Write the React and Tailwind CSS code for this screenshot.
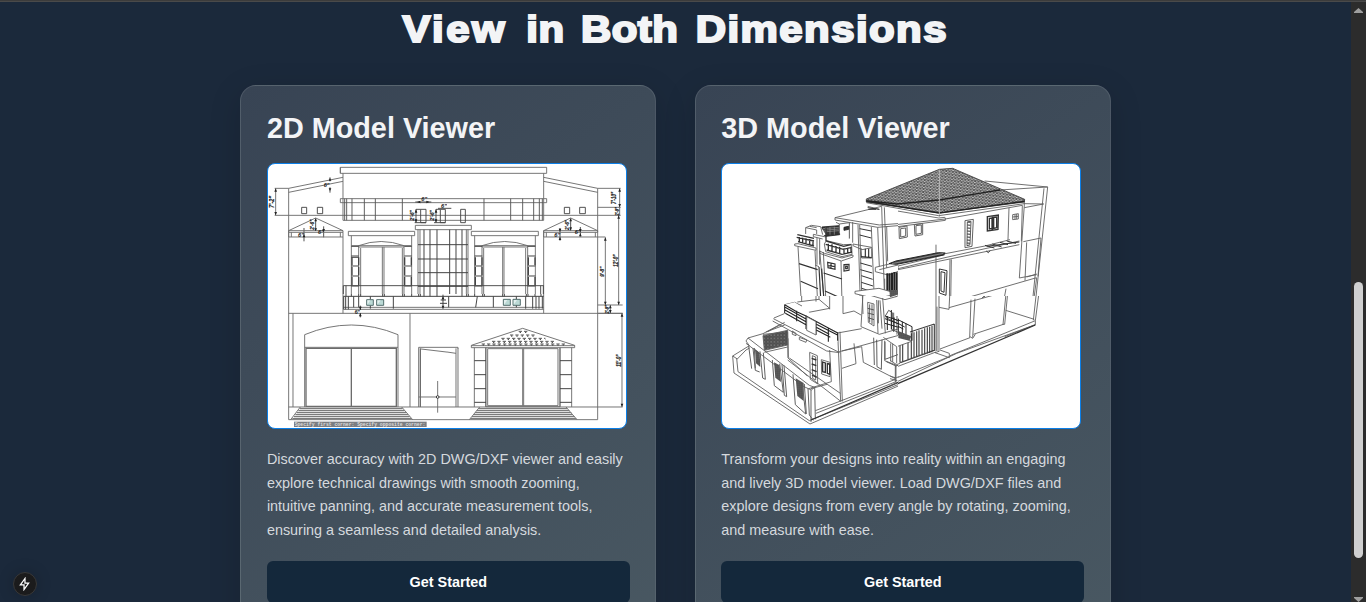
import React from "react";

// Each drawing is split into four tiles, drawn at three units per pixel.
// `clip` is the tile's own area (x, y, width, height), so that neighbours meet without doubling.
function Tile({ id, x, y, clip, children }) {
  return (
    <g transform={`translate(${x} ${y}) scale(0.33333)`}>
      <clipPath id={id}>
        <rect x={clip[0]} y={clip[1]} width={clip[2]} height={clip[3]} />
      </clipPath>
      <g clipPath={`url(#${id})`}>{children}</g>
    </g>
  );
}

function Note({ x, y, size = 20, children }) {
  return (
    <text
      transform={`translate(${x} ${y}) rotate(-90)`}
      fontSize={size}
      fontWeight="bold"
      fontStyle="italic"
      fill="#222"
      stroke="#222"
      strokeWidth="0.6"
      textAnchor="middle"
      textLength={size * 1.8}
      lengthAdjust="spacingAndGlyphs"
    >
      {children}
    </text>
  );
}

function Elevation() {
  return (
    <svg viewBox="268 164 358 264" className="block h-full w-full font-['Liberation_Sans',sans-serif]" fill="none" stroke="#6c6c6c" strokeWidth="2.8">
      <Tile id="elevation-nw" x={262} y={158} clip={[0, 0, 555, 408]}>
        <path d="M570 28H235V46H570M235 28V46M243 46V187M80 91L243 58M80 103L243 70M80 91V420M38 91H80M41 91V172M38 172H570M235 122H570M235 134H570M235 122V134M243 187H570M243 420V237" />
        <path stroke="#555" d="M248 122V187M254 122V187M270 122V187M307 122V187M340 122V187M421 122V187" />
        <path stroke="#444" d="M119 148H134V167H119ZM166 148H182V167H166ZM476 154H492V194H476ZM535 154H550V194H535ZM204 58V70M204 88V104M126 210V250M185 205V238M161 182V218M462 154V194M522 154V194M462 154H476M522 154H535M458 194H492M516 194H550M460 132H508M528 151H565" />
        <path d="M80 218L161 180L243 218M80 218H243V223H80ZM80 223V237H243V223M88 223V237M235 223V237" />
        <path d="M259 220H458V233H259ZM268 233V420M449 233V420M268 263H449M290 263V415M426 263V415M296 270V415M421 270V415M290 267H426M290 263Q357 238 426 263M361 267V415M366 267V415M460 202H570M460 202V215H570M468 215V420M474 215V420" />
        <path stroke="#444" strokeWidth="3" d="M268 265H290M268 294H290M268 298H290M268 324H290M268 354H290M268 384H290M427 265H449M427 294H449M427 324H449M427 354H449M427 384H449M468 260H570M468 303H570M468 344H570M468 385H570M486 215V415M504 215V415M525 215V415M563 215V415" />
        <path stroke="#444" d="M244 383H570M244 383V420M252 383V420M244 415H570" />
        <path stroke="#444" strokeWidth="4" d="M270 298V322M270 327V352M270 357V382M290 298V322M290 327V352M290 357V382M428 298V322M428 327V352M428 357V382M448 298V322M448 357V382" />
        <Note x={37} y={132}>7'-2"</Note>
        <Note x={157} y={200} size={17}>2'-6"</Note>
        <Note x={456} y={172} size={17}>2'-6"</Note>
        <Note x={517} y={172} size={17}>2'-6"</Note>
        <g fill="#222" stroke="none" fontSize="17" fontWeight="bold" fontStyle="italic"><text x="185" y="88">6"</text><text x="108" y="238">6"</text><text x="168" y="228">6"</text><text x="478" y="130">6"</text><text x="537" y="149">6"</text></g>
        <path fill="#222" stroke="none" d="M200 68L204 60L208 68ZM200 91L204 99L208 91ZM122 238L126 228L130 238ZM181 213L185 222L189 213ZM157 190L161 180L165 190ZM157 211L161 220L165 211ZM475 128L465 132L475 136ZM493 128L503 132L493 136ZM37 101L41 91L45 101ZM37 162L41 172L45 162ZM458 164L462 154L466 164ZM458 184L462 194L466 184ZM518 164L522 154L526 164ZM518 184L522 194L526 184Z" />
      </Tile>

      <Tile id="elevation-ne" x={440} y={158} clip={[21, 0, 564, 408]}>
        <path d="M0 28H320V46H0M311 46V187M311 58L473 91M311 70L473 103M473 91V420M473 91H542M473 148H542M0 172H542M0 122H320V134H0M0 187H311M311 420V218M539 91V172M496 238V420M536 172V420" />
        <path stroke="#555" d="M132 122V187M212 122V187M248 122V187M281 122V187M298 122V187M307 122V187" />
        <path stroke="#444" d="M373 148H389V167H373ZM419 148H436V167H419ZM62 154H76V194H62ZM0 151H34M392 182V218M360 210V248M421 207V236" />
        <path d="M311 218L392 180L473 218M311 218H473V223H311ZM311 223V237H496M319 223V237M466 223V237" />
        <path d="M94 220H295V233H94ZM104 233V420M286 233V420M104 263H286M126 263V415M263 263V415M131 270V415M257 270V415M126 267H263M126 263Q194 238 263 263M188 267V415M192 267V415M0 202H94V215H0M84 215V420M79 215V420" />
        <path stroke="#444" strokeWidth="3" d="M104 265H127M104 294H127M104 324H127M104 354H127M104 384H127M263 265H286M263 294H286M263 324H286M263 354H286M263 384H286M0 260H84M0 303H84M0 344H84M0 385H84M29 215V415M48 215V415M66 215V415" />
        <path stroke="#444" d="M0 383H311M0 415H311M302 383V415M310 383V420" />
        <path stroke="#444" strokeWidth="4" d="M106 298V322M106 327V352M106 357V382M126 298V322M126 327V352M126 357V382M265 298V322M265 327V352M265 357V382M285 298V322M285 357V382" />
        <Note x={529} y={120}>7'-10"</Note>
        <Note x={536} y={160} size={14}>2'-9"</Note>
        <Note x={387} y={201} size={17}>2'-6"</Note>
        <Note x={493} y={341} size={17}>9'-8"</Note>
        <Note x={534} y={308}>12'-0"</Note>
        <g fill="#222" stroke="none" fontSize="17" fontWeight="bold" fontStyle="italic"><text x="343" y="238">6"</text><text x="404" y="229">6"</text></g>
        <path fill="#222" stroke="none" d="M388 190L392 180L396 190ZM388 208L392 218L396 208ZM356 212L360 222L364 212ZM356 246L360 236L364 246ZM417 213L421 222L425 213ZM417 235L421 226L425 235ZM535 101L539 91L543 101ZM535 138L539 148L543 138ZM492 248L496 238L500 248ZM532 182L536 172L540 182Z" />
      </Tile>

      <Tile id="elevation-sw" x={262} y={290} clip={[0, 12, 555, 423]}>
        <path d="M80 0V389M93 70V351M80 70H570M243 0V70M444 70V351M128 134V351M408 134V351M128 134Q268 76 408 134M128 172H408M80 351H570M80 389H570M115 351L86 389M419 351L452 389M470 172H570M470 172V351M477 177L570 188M244 52H570M244 58H570" />
        <path strokeWidth="4" d="M132 175V349H403V175ZM268 175V349M475 175V351" />
        <path stroke="#444" strokeWidth="3" d="M244 19H570M245 19V58M251 19V58M259 19V58M275 19V52M290 19V52M325 19V28M325 47V56M394 19V56M543 14V56M252 0V19M268 0V19M290 0V19M296 0V19M362 0V19M367 0V19M422 0V19M427 0V19M449 0V19M470 0V19M475 0V19M486 0V19M504 0V19M525 0V19" />
        <path fill="#bcdad6" stroke="#385755" strokeWidth="2.5" d="M314 29H334V46H314ZM344 29H365V46H344Z" />
        <path fill="#fff" stroke="none" opacity=".6" d="M316 31H325L316 44ZM346 31H356L346 44Z" />
        <path stroke="#7c7c7c" strokeWidth="4" d="M113 356H422M109 362H428M104 368H433M100 374H438M96 380H443M91 386H448" />
        <path d="M527 273V368M470 321H570" /><circle cx="527" cy="321" r="4" fill="#fff" stroke="#333" />
        <path stroke="#333" d="M295 47V60M295 69V82M536 30H552M534 40H555" />
        <path fill="#222" stroke="none" d="M291 50L295 60L299 50ZM291 79L295 69L299 79ZM539 28L543 19L547 28ZM539 47L543 56L547 47Z" />
        <text x="278" y="72" fontSize="16" fontWeight="bold" fill="#222" stroke="none">6"</text>
        <rect x="96" y="395" width="398" height="16" fill="#7b7e82" stroke="none" />
        <text x="98" y="408" fontSize="14.5" fontWeight="bold" textLength="392" lengthAdjust="spacingAndGlyphs" fill="#dcdcdc" stroke="none" className="font-['Liberation_Mono',monospace]">Specify first corner: Specify opposite corner:</text>
      </Tile>

      <Tile id="elevation-se" x={440} y={290} clip={[21, 12, 564, 423]}>
        <path d="M0 70H548M311 0V70M473 0V389M0 351H548M0 389H473M0 172H54V177M48 175V351M54 175V351M0 183L48 190M0 321H48M119 351L88 389M378 351L411 389M546 70V351M496 0V45M536 0V45M473 45H548M511 45V70M473 70H548M0 52H311M0 58H311" />
        <path stroke="#444" strokeWidth="3" d="M0 19H311M26 19V52M112 19L107 52M160 19V52M229 19V28M229 46V52M257 19V56M278 19V56M288 19V56M297 19V56M307 19V56M66 0V19M80 0V19M85 0V19M104 0V19M128 0V19M133 0V19M188 0V19M193 0V19M259 0V19M264 0V19M285 0V19M303 0V19" />
        <path fill="#bcdad6" stroke="#385755" strokeWidth="2.5" d="M190 28H211V46H190ZM219 28H241V46H219Z" />
        <path fill="#fff" stroke="none" opacity=".6" d="M192 30H202L192 44ZM221 30H231L221 44Z" />
        <path d="M94 166L248 115L404 166V173H94ZM94 167H404M103 173V351M137 173V351M143 176V347H354V176ZM138 173V350H360V173M248 176V347M251 176V347M360 173V351M395 173V351" />
        <path stroke="#444" strokeWidth="3" d="M103 212H138M103 254H138M103 296H138M103 337H138M360 212H395M360 254H395M360 296H395M360 337H395" />
        <path stroke="#555" strokeWidth="3" strokeDasharray="10 6" d="M236 124H262M210 135H290M184 145H316M156 154H344M125 162H378" />
        <path stroke="#555" strokeWidth="4" strokeDasharray="4 12" d="M239 127H266M213 138H290M187 148H316M159 157H344M128 165H378" />
        <path stroke="#7c7c7c" strokeWidth="4" d="M115 356H382M110 362H388M105 368H394M100 374H399M96 380H404M91 386H409" />
        <path fill="#222" stroke="none" d="M492 35L496 45L500 35ZM532 35L536 45L540 35ZM507 55L511 45L515 55ZM507 60L511 70L515 60ZM542 80L546 70L550 80ZM542 341L546 351L550 341Z" />
        <Note x={507} y={58} size={14}>2'-9"</Note><Note x={543} y={212}>11'-0"</Note>
      </Tile>
    </svg>
  );
}

function House() {
  return (
    <svg viewBox="722 164 358 264" className="block h-full w-full" fill="none" stroke="#606060" strokeWidth="2.7">
      <defs>
        <pattern id="tiles" width="10" height="9" patternUnits="userSpaceOnUse" patternTransform="rotate(8)">
          <rect width="10" height="9" fill="#404040" />
          <path d="M0 2H6M5 6.500H10" stroke="#e4e4e4" strokeWidth="2.500" />
        </pattern>
        <pattern id="lattice" width="10" height="10" patternUnits="userSpaceOnUse">
          <rect width="10" height="10" fill="#1c1c1c" />
          <rect x="3" y="3" width="4.500" height="4.500" fill="#ddd" />
        </pattern>
        <pattern id="mesh" width="6" height="6" patternUnits="userSpaceOnUse">
          <rect width="6" height="6" fill="#161616" />
          <rect x="2" y="2" width="1.500" height="1.500" fill="#777" />
        </pattern>
      </defs>

      <Tile id="house-ne" x={890} y={158} clip={[24, 0, 576, 414]}>
        <path d="M-60 145L146 180L165 178M0 202L166 183M0 209L166 187M166 179V187M166 183L397 142M284 69L473 87M330 96L473 87M473 87L436 435M462 91L427 435M403 137L461 138M461 138L403 149M403 124V141L388 360M397 142L394 250M357 150L354 246M400 251L453 240L444 355M410 253L405 368M138 260V435" />
        <path strokeWidth="3" d="M27 208L51 204L52 237L28 242ZM32 212L47 210V234L32 237ZM73 200L98 197V230L75 234ZM78 203L94 201V226L78 229ZM225 188L250 184L246 265L225 269ZM232 192L243 190L240 260L231 263Z" />
        <path stroke="#333" strokeWidth="9" strokeDasharray="3 6" d="M237 191L235 264" />
        <path stroke="#333" strokeWidth="4" d="M292 176L325 171L324 214L292 219ZM298 181L306 180V211L298 213ZM311 178L320 177V209L311 211ZM307 176V216" />
        <path d="M368 170L385 167V183L368 185ZM375 169V184M380 168V183M368 177L385 175" />
        <path d="M24 324L165 290M24 332L165 299L388 249M0 340L165 306L388 260M24 324V332M166 287L285 264L360 245M180 304L178 435M184 304L182 435M180 434L440 359M388 360L440 350M410 357L440 348M348 392L340 435M242 420V435M255 417V435M440 360L430 435" />
        <path stroke="#333" strokeWidth="3" d="M285 262L313 270M307 258L335 267M330 253L354 260M350 249L378 256M290 265L388 252M289 279L295 284L300 278M148 333L171 338L168 412L148 405ZM153 341L165 344L162 403L153 399Z" />
      </Tile>

      <Tile id="house-nw" x={716} y={158} clip={[0, 0, 546, 414]}>
        <path d="M455 145L490 154M357 179L497 145M357 179V186L485 208L570 201M357 179L490 201L570 195M497 145L506 435M505 148L512 330M400 192V240M410 192V254M426 200L433 435M431 201L438 435M466 207L474 400M485 208L490 325M512 205L515 310" />
        <path stroke="#333" strokeWidth="3" d="M455 149L490 154M457 154H480M431 212L466 219M431 231L466 240M433 315L468 325M433 335L469 345M436 353L470 364M436 373L471 384M437 391L472 402" />
        <path fill="#333" stroke="#222" d="M318 207L370 203L371 230L330 235L318 227Z" />
        <path stroke="#999" strokeWidth="2" d="M320 212L369 208M320 217L369 213M320 222L369 218M329 207V230M342 207V230M355 206V230" />
        <path fill="#fff" stroke="none" d="M269 209L286 202L314 206L330 230L295 238L269 216ZM370 198L400 194V242L370 225ZM236 258L244 230L294 239L297 277L236 263ZM246 266L297 278L305 435H256ZM322 282L376 305L378 435H330Z" />
        <path d="M269 209L286 202L314 206L320 230M269 209V228M269 209L302 216V228M281 205L302 209M370 198L400 194V242M370 198V225M360 193L370 198M246 266L256 435M297 278L305 435M311 278L325 435M322 282L330 435M236 258L246 257L300 270V277L236 263ZM311 279L325 286L378 300L411 291V297L376 309L311 286ZM292 229L330 237M292 229V236L320 243M303 239V320M311 241V320" />
        <path fill="#fff" d="M325 258L331 248L382 260L407 259L408 289L378 296L329 281Z" />
        <path stroke="#333" strokeWidth="4" d="M244 230L294 241M242 238L294 249M246 251L294 264M331 249L383 265L405 260M329 259L382 274L407 268M332 276L378 289L408 282M250 237V252M260 239V254M270 241V259M281 243V261M291 246V265M337 257V276M348 259V280M360 264V283M371 266V287M384 271V288M395 269V286M405 266V284M330 207V250" />
        <path fill="#333" stroke="#222" d="M384 208L398 205V214L384 217Z" />
        <path d="M375 309L378 435M411 258L467 268M411 258V263L438 275L468 269M435 270L437 300L467 300V271M297 321L309 326M301 422L338 418" />
        <path stroke="#333" strokeWidth="3.5" d="M249 317L305 335M254 370L306 392M323 345L378 363M327 399L378 422M309 327L314 420L323 415L317 332M335 313L357 318V334L336 329ZM345 317V331M336 323L357 326M384 320L399 319V337L384 339ZM389 325H394V332H389ZM448 272V297M458 272V297M435 296L467 299" />
        <path d="M478 328L520 318M478 328V341L516 351L570 332M490 335L570 315M506 362V402" />
        <path stroke="#222" strokeWidth="6" d="M514 346V402M521 346V405M528 344V406M535 342V407M542 343V406" />
        <path fill="#fff" d="M417 400L489 391L546 407L507 416L474 421L417 407Z" />
        <path d="M546 407V414M230 433L250 435" />
      </Tile>

      {/* Roof and the dark ledge under it, which cross the tile boundary */}
      <g transform="translate(890 158) scale(0.33333)">
        <path fill="url(#tiles)" stroke="#444" d="M148 34L188 31L404 124L403 132L146 165L-71 132V123Z" />
        <path stroke="#222" strokeWidth="4" d="M-71 128L20 138L148 126L285 103L330 96M-71 130L148 165L403 130" />
        <path stroke="#bbb" strokeWidth="3" d="M148 35V178" />
        <path d="M-71 134L146 173L403 137" />
        <path fill="#444" stroke="#222" strokeWidth="3" d="M-3 317L18 309L145 284L166 285L160 291L20 319Z" />
        <path stroke="#ccc" strokeWidth="1.5" d="M6 317L160 286" />
      </g>

      <Tile id="house-sw" x={716} y={290} clip={[0, 18, 546, 417]}>
        <path fill="#fff" d="M50 198L100 167L90 153L96 144L141 131L206 96M50 198L54 249L282 402L570 278M50 198L64 207L90 180L101 174M62 205L66 245L280 392L570 274" />
        <path fill="#fff" d="M174 84L205 71L332 178L365 189L371 200L173 92Z" stroke="none" />
        <path d="M96 144L280 286L296 292L286 300L264 290L90 160" />
        <path d="M141 133L215 126L216 204L274 258M172 86L367 186L570 130M170 93L332 183L371 188M206 44L365 129L437 116M206 44L236 37L258 48M244 36L309 28L341 55L278 67M309 28V16L341 17V58M381 0V71L414 63L435 75M257 0V33M300 35V10M365 129L374 335M372 125L379 334M414 160L420 221L378 235M378 183L437 170M437 170L442 217L538 266M298 362L374 333L538 268M300 370L540 275M215 210L373 333M220 204L373 310M333 283L285 296M341 180L346 275L278 296M174 84L205 71" />
        <path fill="#fff" d="M206 44L236 37L365 129V155L208 70Z" stroke="none" />
        <path stroke="#222" strokeWidth="3.2" d="M206 44L242 65L270 78L365 129M206 51L270 87L366 136M207 60L270 95L340 133M208 70L270 104L343 142M242 62V94M270 76V117M300 95V134M337 114V155M365 127V152M206 44V70" />
        <path fill="#fff" d="M272 80L300 95V135L272 121Z" />
        <path fill="url(#lattice)" d="M141 137L215 121V165L145 181Z" />
        <path d="M145 187L215 171M216 145L217 203M229 123L240 130V137L229 133ZM250 142L272 150L270 157L250 149ZM281 187L304 197L305 282L283 268ZM289 197L299 201V270L290 265ZM316 209L342 217V260L317 252ZM155 125L206 97M150 126L206 105" />
        <path stroke="#333" strokeWidth="4" d="M320 216L328 219V247L320 245ZM334 220L341 222V253L334 250ZM287 205L301 210M287 222L301 227M287 239L302 245M288 255L302 262" />
        <path fill="url(#mesh)" stroke="none" d="M117 177L131 188L133 231L120 220ZM174 217L191 226L195 276L178 263ZM239 265L263 279L263 333L244 318Z" />
        <path strokeWidth="3" d="M98 168L107 236M111 174L118 241L131 246M115 174L118 235M132 184L140 264L148 268L142 188M169 210L175 287L202 307L191 221M198 223L205 316L212 320L204 226M231 253L238 344L269 372L260 292M265 282L271 372M276 295L280 375L292 391M285 300V396M296 292L298 388" />
        <path fill="#fff" d="M441 30L508 20V130L486 130L435 110Z" stroke="none" />
        <path d="M430 0L439 12L441 72M416 7L430 0L493 6L544 19L507 29L440 9M441 12L435 110M482 30L486 130M492 31L498 116M500 24L508 130M435 110L490 133L570 110M455 37L474 42V108L457 97Z" />
        <path stroke="#444" strokeWidth="2.6" d="M461 43V97M468 43V102M455 55L474 60M455 69L474 74M456 83L474 89M487 31V100M473 143L475 225M482 149L483 230L496 238L498 149M508 78L518 61L529 68V84L570 104M509 82L546 101M527 82V118L546 127M533 68V126M543 78V134M507 208L570 185M511 215L540 228L570 218M507 155V208M538 228V275" />
        <path fill="url(#mesh)" stroke="none" d="M529 0L546 3V14L529 10Z" />
        <path stroke="#333" strokeWidth="4" d="M285 390L570 267" />
      </Tile>

      <Tile id="house-se" x={890} y={290} clip={[24, 18, 576, 417]}>
        <path d="M138 0V183M147 0V52L177 58L180 0M177 53L351 4M147 52L147 185M141 50V183M243 29L239 143M255 26L248 143M240 140L248 145L256 133M349 0L339 104M354 0L344 103L338 103M448 0L436 92M440 0L430 91M436 92V104L344 140M347 61L433 88M150 177L240 143M250 133L340 103M180 197L436 92M24 274L200 190L436 104M147 184L135 188L178 203V190L150 180M24 229L138 186M24 262L178 200" />
        <path stroke="#333" strokeWidth="4" d="M0 291L436 105" />
        <path stroke="#444" strokeWidth="3.5" d="M30 144V218M38 147V215M54 145V210M64 130V207M72 127V204M80 124V201M87 121V199M96 119V196M104 115V194M112 112V191M119 110V189M126 107V187M133 102V183M60 126L133 102M31 218L132 181" />
        <path fill="#fff" d="M0 118L38 140L65 154L20 170L0 160Z" />
        <path stroke="#222" strokeWidth="3" d="M0 77L66 110V152M25 86V135M37 95V138M48 101V142M24 100L44 111M24 109L40 117M146 0V13L168 16V0M151 0V8L163 10V0M277 23L286 17L292 11" />
        <path fill="url(#mesh)" stroke="none" d="M25 123L64 139L58 152L25 144Z" />
      </Tile>

      {/* Stair block at the centre of the lower half */}
      <g transform="translate(890 290) scale(0.33333)">
        <path d="M18 278V225M0 258L18 264L26 260M0 266L22 272M0 211L20 224L30 220M0 288L20 278M-16 152V212L20 226M2 160V214M8 161V216M-20 142L20 170V220" />
        <path stroke="#222" strokeWidth="3" d="M-15 78L26 92M-15 86L24 101M4 60V118M12 82V119M-8 78V120M-15 100L26 112" />
        <path fill="url(#mesh)" stroke="none" d="M-2 0L23 0V14L0 22Z" />
      </g>
    </svg>
  );
}

function Card({ title, lines, drawing }) {
  return (
    <section className="h-[560px] w-[416px] shrink-0 rounded-[16px] border border-white/10 bg-linear-[145deg,#384454,#495862] px-[25.6px] pt-[22px] shadow-[0_8px_32px_rgba(0,0,0,0.15)]">
      <h2 className="text-[28.8px] leading-[40px] font-bold whitespace-nowrap text-[#f3f4f6]">{title}</h2>
      <div className="mt-[15px] h-[266px] w-[360px] overflow-hidden rounded-[8px] border border-[#0b7fe8] bg-white">{drawing}</div>
      <p className="mt-[19px] text-[14.4px] leading-[23.6px] whitespace-nowrap text-[#d5d9de]">
        {lines.map((line) => (
          <span key={line} className="block">{line}</span>
        ))}
      </p>
      <button className="mt-[19px] block h-[42px] w-[363px] rounded-[6px] bg-[#14283b] text-[14.4px] font-bold text-white">Get Started</button>
    </section>
  );
}

export default function App() {
  return (
    <div className="flex h-[602px] w-[1366px] flex-col overflow-hidden bg-[#1b293b] font-['Liberation_Sans',Arial,sans-serif]">
      <div className="h-[2px] shrink-0 border-b border-[#4a4a4a] bg-[#3c3c3c]" />
      <div className="flex min-h-0 flex-1">
        <main className="flex w-[1351px] shrink-0 flex-col items-center">
          <h1 className="mt-[3px] h-[48px] scale-x-[1.14] text-[36.8px] leading-[49px] font-bold tracking-[1.85px] whitespace-nowrap text-[#f3f4f6] [-webkit-text-stroke:2.1px_#f3f4f6]">
            <span className="mr-[4.8px] tracking-[2.1px]">View</span>{" "}
            <span className="mr-[2.1px] tracking-[0.6px]">in</span>{" "}
            <span className="mr-[3.2px] tracking-[0.4px]">Both</span>{" "}
            <span className="tracking-[1.27px]">Dimensions</span>
          </h1>
          <div className="mt-[32px] flex gap-[38.4px]">
            <Card
              title="2D Model Viewer"
              drawing={<Elevation />}
              lines={["Discover accuracy with 2D DWG/DXF viewer and easily", "explore technical drawings with smooth zooming,", "intuitive panning, and accurate measurement tools,", "ensuring a seamless and detailed analysis."]}
            />
            <Card
              title="3D Model Viewer"
              drawing={<House />}
              lines={["Transform your designs into reality within an engaging", "and lively 3D model viewer. Load DWG/DXF files and", "explore designs from every angle by rotating, zooming,", "and measure with ease."]}
            />
          </div>
        </main>
        <aside className="flex w-[15px] shrink-0 flex-col items-center bg-[#2c2c2c] pt-[6px]">
          <svg className="h-[5px] w-[9px]" viewBox="0 0 9 5"><path d="M0 5V4L4.5 0L9 4V5Z" fill="#9f9f9f" /></svg>
          <div className="mt-[269px] h-[276px] w-[9px] rounded-full bg-[#d0d0d0]" />
          <svg className="mt-[39px] h-[5px] w-[9px]" viewBox="0 0 9 5"><path d="M0 0V1L4.5 5L9 1V0Z" fill="#9f9f9f" /></svg>
        </aside>
      </div>
      <div className="fixed top-[572px] left-[13px] flex size-[24px] items-center justify-center rounded-full border border-[#383838] bg-[#1b1b1c] shadow-[0_0_16px_rgba(0,0,0,0.2)]">
        <svg className="mr-px h-[14px] w-[11px]" viewBox="0 0 12 14" fill="none" stroke="#fff" strokeWidth="1.4" strokeLinejoin="miter"><path d="M6.500 1L1.500 8H5.500V13L10.500 6H6.500Z" /></svg>
      </div>
    </div>
  );
}
